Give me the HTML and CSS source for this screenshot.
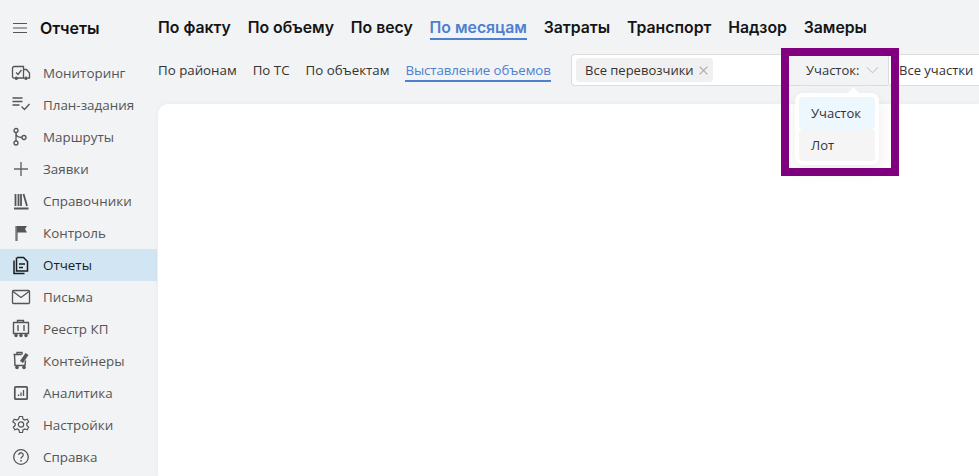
FILE: index.html
```html
<!DOCTYPE html>
<html lang="ru">
<head>
<meta charset="utf-8">
<title>Отчеты</title>
<link rel="stylesheet" href="styles.css">
</head>
<body>
<div class="app">
  <aside class="sidebar">
    <div class="brand">
      <svg class="burger" viewBox="0 0 14 10" width="14" height="10"><path d="M0 .5h14M0 5h14M0 9.500h14" stroke="#555" stroke-width="1.100"/></svg>
      <span>Отчеты</span>
    </div>
    <nav class="nav">
      <a class="nav-item"><svg viewBox="0 0 20 20" class="ico"><path d="M3.500 15H3Q1.500 15 1.500 13.500V5.500Q1.500 3.500 3.500 3.500H12.500V15H7M12.500 6.500H15.500L18.500 10V15H17M12.500 15H13M5 9.500l2 2 3.500-4.500" fill="none" stroke="#555" stroke-width="1.300"/><circle cx="5.300" cy="15.200" r="1.800" fill="#555"/><circle cx="15" cy="15.200" r="1.800" fill="#555"/></svg>Мониторинг</a>
      <a class="nav-item"><svg viewBox="0 0 20 20" class="ico"><path d="M1.500 3h10M1.500 6.500h10M1.500 10h7M10.500 11.500l3 3 5-5.500" fill="none" stroke="#555" stroke-width="1.400"/></svg>План-задания</a>
      <a class="nav-item"><svg viewBox="0 0 20 20" class="ico"><circle cx="5" cy="3.500" r="2" fill="none" stroke="#555" stroke-width="1.300"/><circle cx="5" cy="16" r="2" fill="none" stroke="#555" stroke-width="1.300"/><circle cx="13" cy="10.500" r="2" fill="none" stroke="#555" stroke-width="1.300"/><path d="M5 5.500V14M5 6q0 4.500 6 4.500" fill="none" stroke="#555" stroke-width="1.300"/></svg>Маршруты</a>
      <a class="nav-item"><svg viewBox="0 0 20 20" class="ico"><path d="M10 3v14M3 10h14" stroke="#666" stroke-width="1.400"/></svg>Заявки</a>
      <a class="nav-item"><svg viewBox="0 0 20 20" class="ico"><path d="M4.500 3v12M7.500 3v12M10 3v12M12.500 3l3.500 12M3 17.500h14.500" fill="none" stroke="#555" stroke-width="1.800"/></svg>Справочники</a>
      <a class="nav-item"><svg viewBox="0 0 20 20" class="ico"><path d="M5.500 3v15" stroke="#777" stroke-width="2.400"/><path d="M6 3h10l-2 3 2 3.500H6z" fill="#555"/></svg>Контроль</a>
      <a class="nav-item is-active"><svg viewBox="0 0 20 20" class="ico"><path d="M5.500 2.500V16H16.500V6.500L12.500 2.500H6M3 5.500v13h10.500M8 9h6M8 12.500h4" fill="none" stroke="#1c1c1c" stroke-width="1.500"/></svg>Отчеты</a>
      <a class="nav-item"><svg viewBox="0 0 20 20" class="ico"><rect x="1.500" y="3.500" width="17" height="13" rx="1" fill="none" stroke="#555" stroke-width="1.300"/><path d="M2 4.500l8 6 8-6" fill="none" stroke="#555" stroke-width="1.300"/></svg>Письма</a>
      <a class="nav-item"><svg viewBox="0 0 20 20" class="ico"><path d="M6.500 3.500V1.500h6v2M2 3.500h16M2.500 3.500v11h15v-11M7 6v6M13 6v6" fill="none" stroke="#555" stroke-width="1.400"/><circle cx="5" cy="16.500" r="1.700" fill="#555"/><circle cx="15" cy="16.500" r="1.700" fill="#555"/><circle cx="10" cy="16.500" r="1.700" fill="#555"/></svg>Реестр КП</a>
      <a class="nav-item"><svg viewBox="0 0 20 20" class="ico"><path d="M6 3.500V1.500h5v2M2.500 3.500h8M3.500 3.500l.5 11h10l.5-5" fill="none" stroke="#555" stroke-width="1.400"/><path d="M9 10l5.500-8 3 2-5.500 8z" fill="#555"/><circle cx="6" cy="16.500" r="1.800" fill="#555"/><circle cx="13" cy="16.500" r="1.800" fill="#555"/></svg>Контейнеры</a>
      <a class="nav-item"><svg viewBox="0 0 20 20" class="ico"><rect x="3.800" y="3.800" width="12.400" height="12.400" rx="1" fill="none" stroke="#555" stroke-width="1.700"/><path d="M7.500 13v-1.500M10 13V9.500M12.500 13V7" stroke="#555" stroke-width="1.300"/></svg>Аналитика</a>
      <a class="nav-item"><svg viewBox="0 0 20 20" class="ico"><path d="M8.500 1.500h3l.5 2.500 1.800 1 2.400-.8 1.500 2.600-1.900 1.700v2l1.900 1.700-1.500 2.600-2.400-.8-1.800 1-.5 2.500h-3l-.5-2.500-1.800-1-2.400.8-1.500-2.600 1.900-1.700v-2L1.800 6.800l1.500-2.600 2.400.8 1.800-1z" fill="none" stroke="#555" stroke-width="1.200"/><circle cx="10" cy="9.500" r="2.700" fill="none" stroke="#555" stroke-width="1.200"/></svg>Настройки</a>
      <a class="nav-item"><svg viewBox="0 0 20 20" class="ico"><circle cx="10" cy="10" r="7.300" fill="none" stroke="#555" stroke-width="1.300"/><path d="M7.800 8a2.200 2.200 0 1 1 3.400 1.800c-.8.500-1.200 1-1.200 2" fill="none" stroke="#555" stroke-width="1.300"/><circle cx="10" cy="13.800" r=".9" fill="#555"/></svg>Справка</a>
    </nav>
  </aside>
  <main class="main">
    <div class="tabs">
      <a class="tab">По факту</a>
      <a class="tab">По объему</a>
      <a class="tab">По весу</a>
      <a class="tab is-active">По месяцам</a>
      <a class="tab">Затраты</a>
      <a class="tab">Транспорт</a>
      <a class="tab">Надзор</a>
      <a class="tab">Замеры</a>
    </div>
    <div class="toolbar">
      <div class="subtabs">
        <a class="subtab">По районам</a>
        <a class="subtab">По ТС</a>
        <a class="subtab">По объектам</a>
        <a class="subtab is-active">Выставление объемов</a>
      </div>
      <div class="filter">
        <div class="select">
          <span class="chip">Все перевозчики<svg viewBox="0 0 8 8" width="9" height="9"><path d="M.5.500l7 7M7.500.500l-7 7" stroke="#aaa" stroke-width="1"/></svg></span>
        </div>
        <div class="addon">Участок:<svg viewBox="0 0 14 8" width="13" height="8"><path d="M1 1l6 6 6-6" fill="none" stroke="#b5b5b5" stroke-width="1"/></svg></div>
        <div class="value">Все участки</div>
      </div>
    </div>
    <div class="panel"></div>
  </main>
</div>
<div class="highlight"></div>
<div class="dropdown">
  <div class="option is-selected">Участок</div>
  <div class="option is-hover">Лот</div>
</div>
</body>
</html>
```
FILE: styles.css
```css
* { box-sizing: border-box; }
html, body { margin: 0; height: 100%; overflow: hidden; }
body {
  position: relative;
  background: #f1f3f5;
  font-family: "Open Sans", "Noto Sans", sans-serif;
  color: #222;
}
.app { display: flex; height: 476px; }
.sidebar { width: 157px; flex: none; }
.brand {
  display: flex;
  align-items: center;
  gap: 13px;
  height: 24px;
  margin-top: 16px;
  padding-left: 13px;
  font-family: Inter, sans-serif;
  font-size: 16px;
  font-weight: 600;
  color: #111;
}
.nav { margin-top: 17px; display: flex; flex-direction: column; }
.nav-item {
  display: flex;
  align-items: center;
  gap: 12px;
  height: 32px;
  padding-left: 11px;
  font-size: 13.400px;
  font-weight: 500;
  color: #555;
}
.nav-item.is-active { background: #d2e5f3; color: #1c1c1c; }
.ico { width: 20px; height: 20px; flex: none; }
.main { flex: 1; min-width: 0; display: flex; flex-direction: column; }
.tabs {
  display: flex;
  gap: 16.800px;
  height: 40px;
  margin-top: 16px;
  padding-left: 1px;
  font-family: Inter, sans-serif;
  font-size: 15.800px;
  font-weight: 600;
  color: #151515;
}
.tab { height: 24px; line-height: 23px; white-space: nowrap; }
.tab.is-active { color: #4f7fd0; border-bottom: 2px solid #4f7fd0; }
.toolbar { display: flex; align-items: flex-start; height: 48px; }
.subtabs {
  display: flex;
  flex: none;
  gap: 16px;
  width: 414px;
  padding-left: 1px;
  font-size: 13.300px;
  color: #333;
}
.subtab { height: 26px; line-height: 28px; white-space: nowrap; }
.subtab.is-active { color: #4f7fd0; border-bottom: 2px solid #4f7fd0; letter-spacing: -.1px; }
.filter { display: flex; flex: none; height: 32px; margin-top: -2px; white-space: nowrap; font-size: 13px; color: #333; }
.select {
  width: 218px;
  background: #fff;
  border: 1px solid #dcdcdc;
  border-right: 0;
  border-radius: 4px 0 0 4px;
  padding: 3px 4px;
}
.chip {
  display: inline-flex;
  align-items: center;
  gap: 5px;
  height: 24px;
  padding: 0 5px 0 9px;
  background: #f0f0f0;
  border-radius: 4px;
}
.addon {
  display: flex;
  align-items: center;
  gap: 7px;
  width: 99px;
  padding-left: 17px;
  background: #f1f3f5;
  border-top: 1px solid #dcdcdc;
  border-bottom: 1px solid #dcdcdc;
}
.value {
  width: 100px;
  padding-left: 10px;
  line-height: 30px;
  background: #fff;
  border: 1px solid #dcdcdc;
  border-right: 0;
  border-radius: 4px 0 0 4px;
}
.panel { flex: 1; margin-left: 1px; background: #fff; border-radius: 10px 0 0 0; box-shadow: 0 0 6px rgba(0,0,0,.04); }
.highlight {
  position: absolute;
  left: 781px;
  top: 48px;
  width: 118px;
  height: 128px;
  border: 8px solid #800080;
}
.dropdown {
  position: absolute;
  left: 795px;
  top: 93px;
  width: 84px;
  height: 72px;
  padding: 4px;
  background: #fff;
  border-radius: 8px;
  box-shadow: 0 6px 16px rgba(0,0,0,.08);
  font-size: 13px;
  font-weight: 500;
  color: #333;
}
.dropdown::before {
  content: "";
  position: absolute;
  left: 54px;
  top: -4px;
  width: 9px;
  height: 9px;
  background: #fff;
  transform: rotate(45deg);
}
.option { position: relative; height: 32px; line-height: 32px; padding-left: 12px; border-radius: 4px; }
.option.is-selected { background: #ecf7fe; }
.option.is-hover { background: #f5f5f5; }
```
